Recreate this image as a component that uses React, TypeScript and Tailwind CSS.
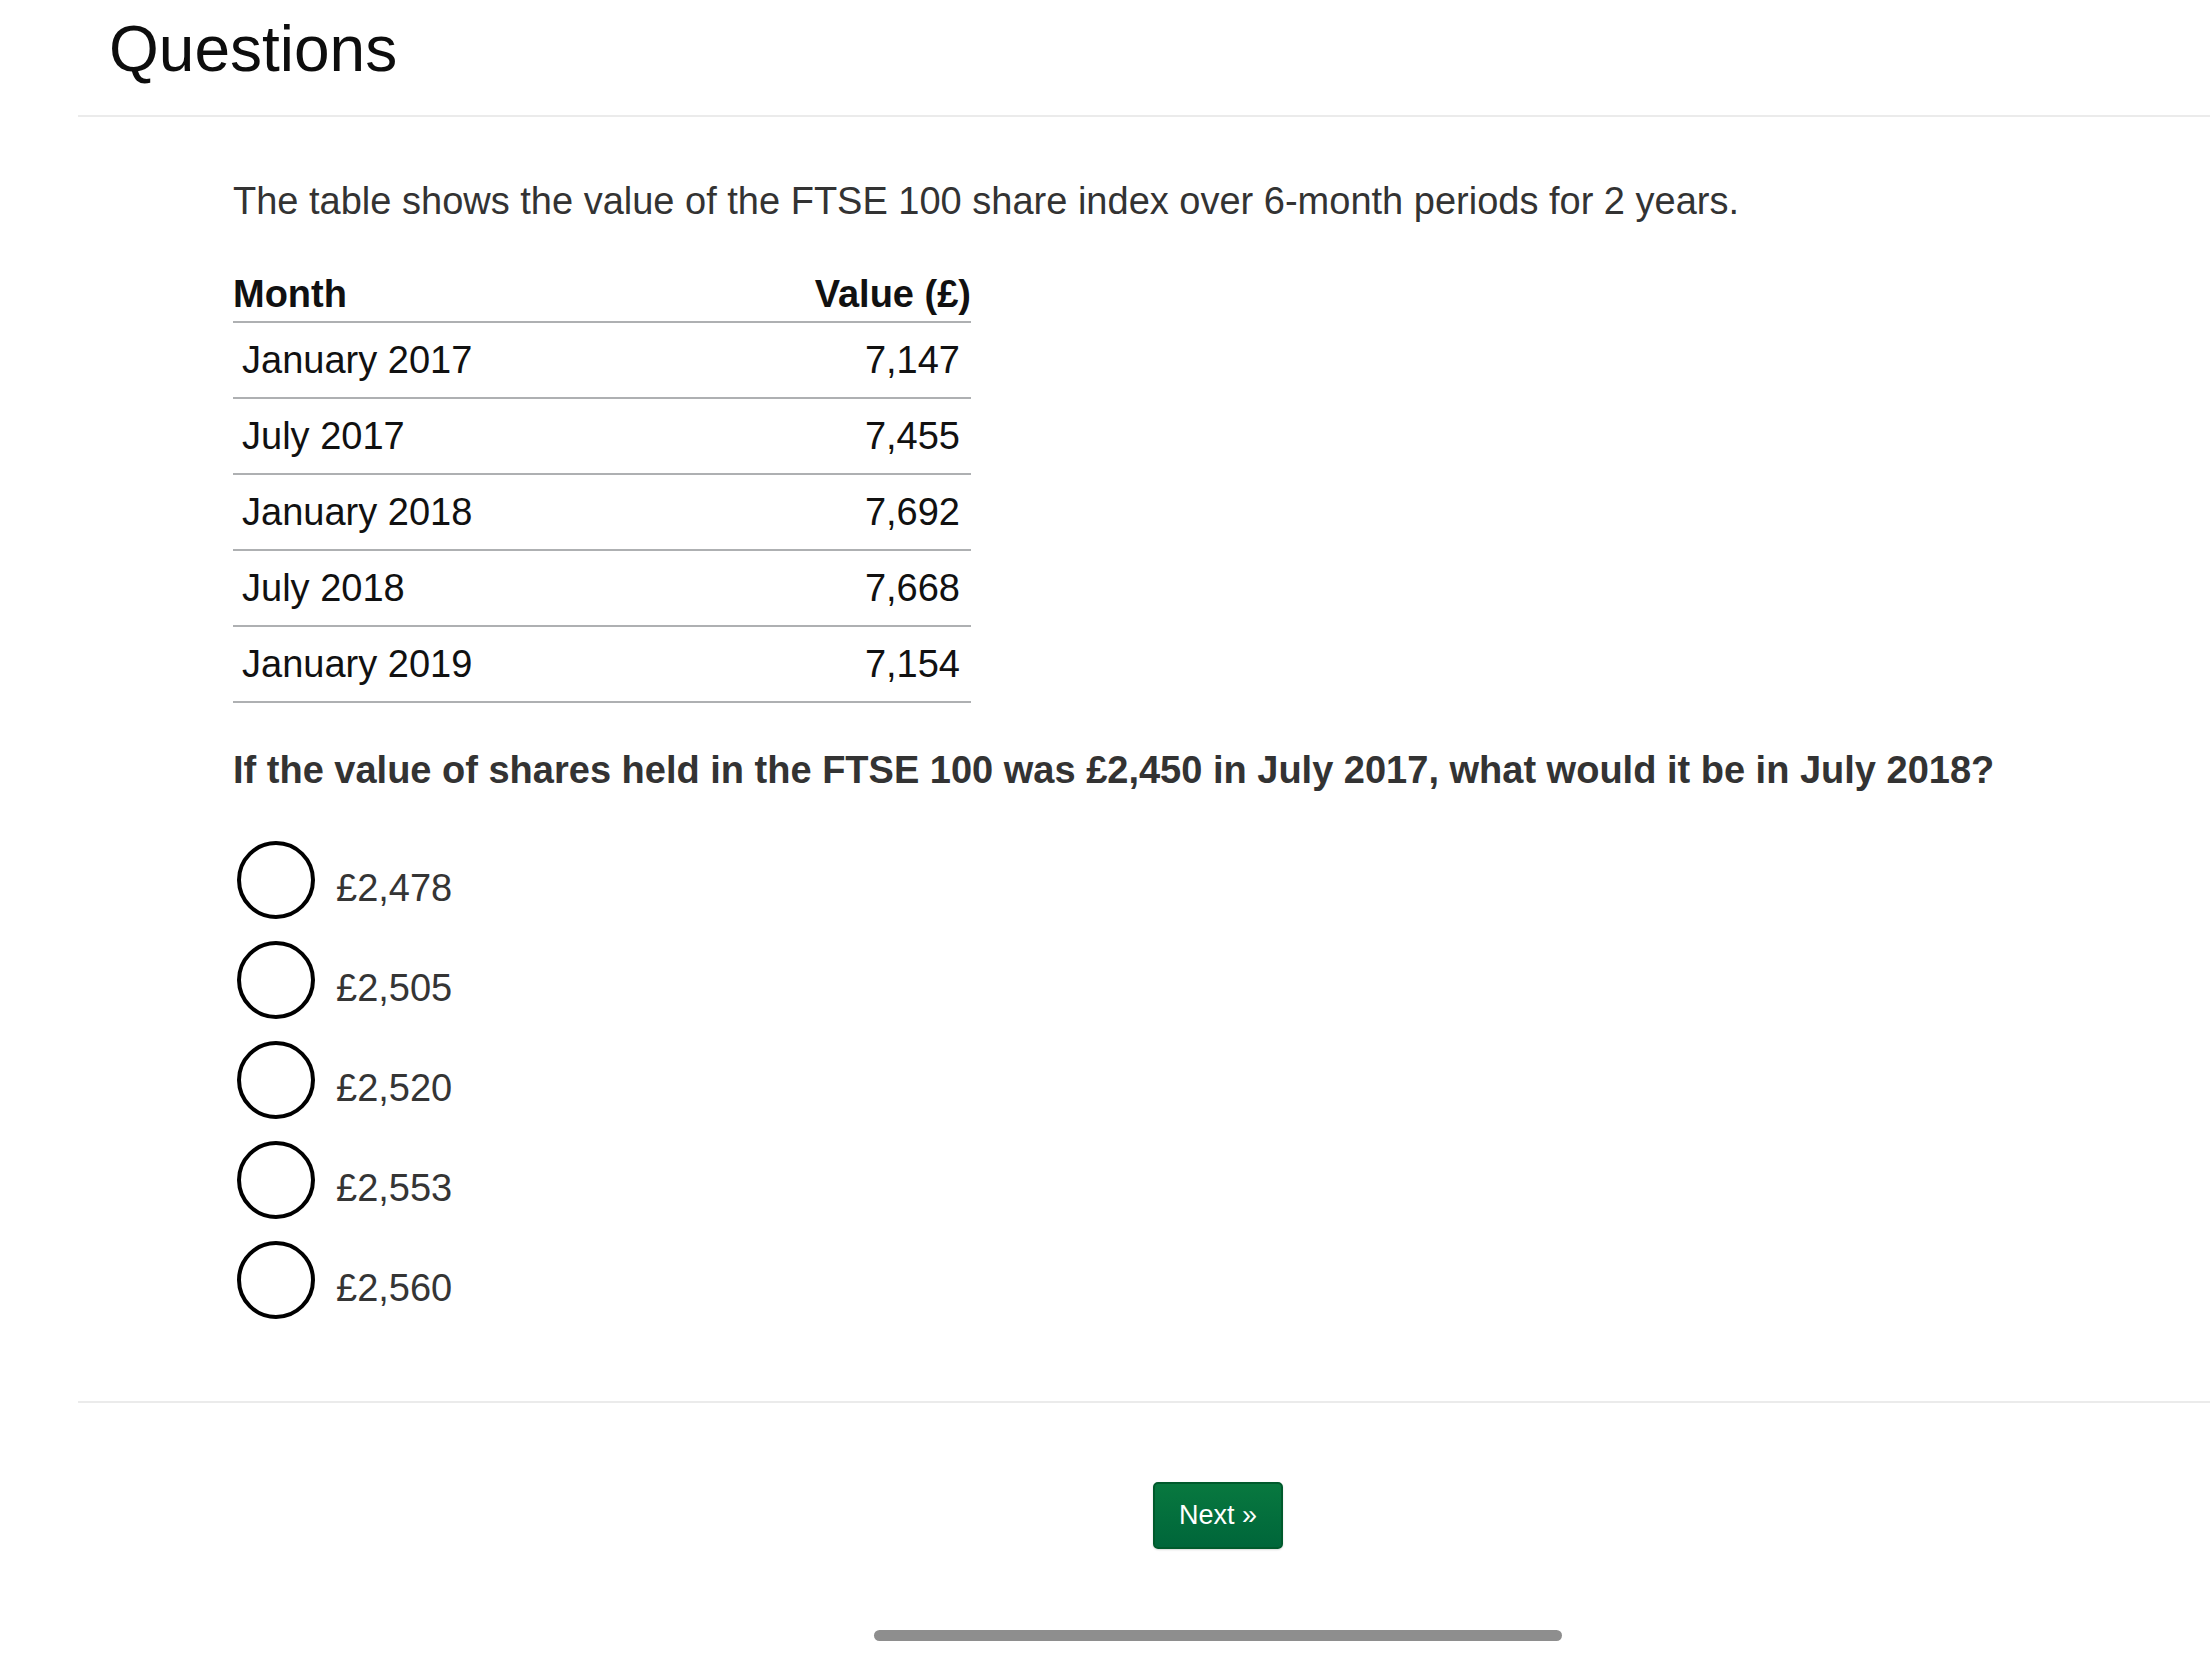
import React from 'react';

const ROWS = [
  { month: 'January 2017', value: '7,147' },
  { month: 'July 2017', value: '7,455' },
  { month: 'January 2018', value: '7,692' },
  { month: 'July 2018', value: '7,668' },
  { month: 'January 2019', value: '7,154' },
];

const OPTIONS = ['£2,478', '£2,505', '£2,520', '£2,553', '£2,560'];

const App: React.FC = () => {
  return (
    <div className="min-h-[1656px] w-full bg-white font-['Liberation_Sans',Arial,sans-serif]">
      {/* Page title */}
      <header className="h-[115px] pl-[109px] pt-[17px]">
        <h1 className="text-[64px] leading-none text-[#0d0d0d]">Questions</h1>
      </header>
      <div className="ml-[78px] border-t-2 border-[#ebebeb]" />

      <main className="pl-[233px] pt-[62px]">
        <p className="text-[38px] leading-[44px] text-[#333333]">
          The table shows the value of the FTSE 100 share index over 6-month periods for 2 years.
        </p>

        <table className="mt-[49px] w-[738px] border-collapse text-[38px] leading-[44px] text-[#111111]">
          <thead>
            <tr className="border-b-2 border-[#aeb0b2]">
              <th className="p-0 pb-[5px] text-left font-bold">Month</th>
              <th className="p-0 pb-[5px] text-right font-bold">Value (£)</th>
            </tr>
          </thead>
          <tbody>
            {ROWS.map((row) => (
              <tr key={row.month} className="border-b-2 border-[#aeb0b2]">
                <td className="py-[15px] pl-[9px] font-normal">{row.month}</td>
                <td className="py-[15px] pr-[11px] text-right font-normal">{row.value}</td>
              </tr>
            ))}
          </tbody>
        </table>

        <p className="mt-[45px] text-[38px] font-bold leading-[44px] text-[#333333]">
          If the value of shares held in the FTSE 100 was £2,450 in July 2017, what would it be in July 2018?
        </p>

        {/* Answer options */}
        <div className="mt-[49px] flex flex-col gap-[22px] pl-[4px]">
          {OPTIONS.map((opt) => (
            <label key={opt} className="flex items-start">
              <span className="h-[78px] w-[78px] shrink-0 rounded-full border-4 border-black bg-white" />
              <span className="ml-[21px] mt-[25px] text-[38px] leading-[44px] text-[#353535]">{opt}</span>
            </label>
          ))}
        </div>
      </main>

      <div className="ml-[78px] mt-[82px] border-t-2 border-[#ebebeb]" />

      <div className="pl-[1153px] pt-[79px]">
        <button className="flex h-[67px] w-[130px] items-center justify-center rounded-[5px] border-2 border-[#005a2c] bg-gradient-to-b from-[#08783f] to-[#00663a] text-[27px] text-white shadow-[0_1px_2px_rgba(0,0,0,0.15)]">
          Next »
        </button>
      </div>

      <div className="ml-[874px] mt-[81px] h-[11px] w-[688px] rounded-full bg-[#8e8e8e]" />
    </div>
  );
};

export default App;
